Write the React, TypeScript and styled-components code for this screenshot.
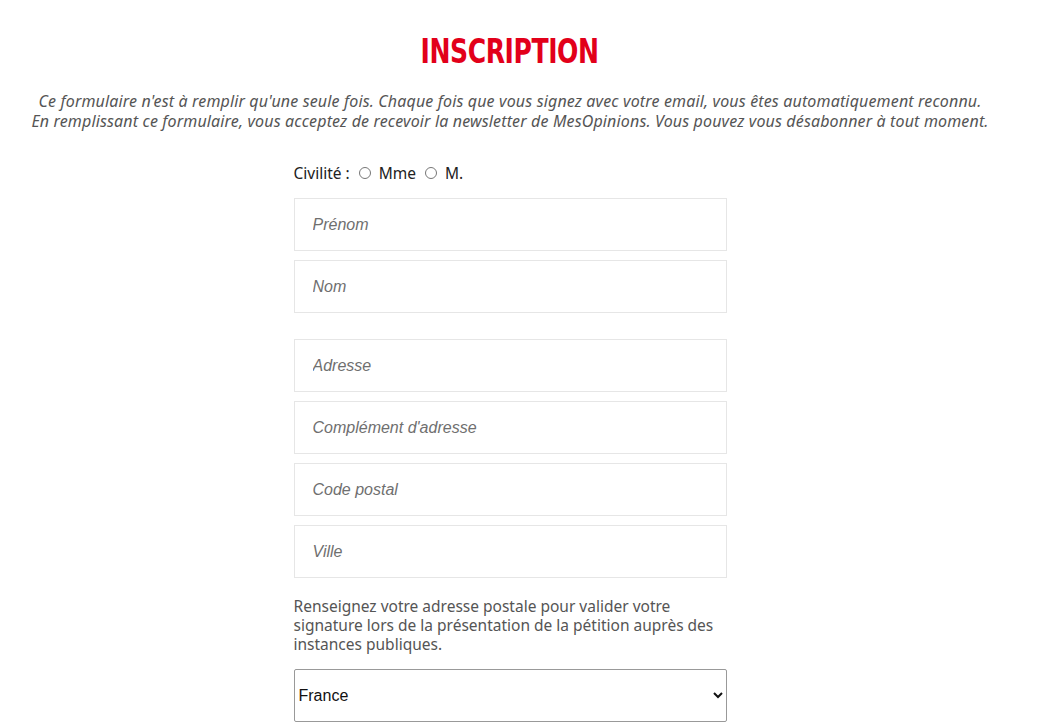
import React from 'react';
import styled, { createGlobalStyle } from 'styled-components';

const GlobalStyle = createGlobalStyle`
  html, body {
    margin: 0;
    padding: 0;
    background: #fff;
  }
  body {
    font-family: "Noto Sans", "Open Sans", sans-serif;
  }
`;

const addressFields = ['Adresse', "Complément d'adresse", 'Code postal', 'Ville'];

function App() {
  return (
    <>
      <GlobalStyle />
      <Page>
        <Title>INSCRIPTION</Title>
        <Intro>
          <IntroLine>
            Ce formulaire n'est à remplir qu'une seule fois. Chaque fois que vous signez avec votre email, vous êtes automatiquement reconnu.
          </IntroLine>
          <IntroLine>
            En remplissant ce formulaire, vous acceptez de recevoir la newsletter de MesOpinions. Vous pouvez vous désabonner à tout moment.
          </IntroLine>
        </Intro>
        <Form>
          <Civility>
            <span>Civilité :</span>
            <label><Radio type="radio" name="civ" />Mme</label>
            <label><Radio type="radio" name="civ" />M.</label>
          </Civility>
          <Group>
            <Field placeholder="Prénom" />
            <Field placeholder="Nom" />
          </Group>
          <Group>
            {addressFields.map((p) => (
              <Field key={p} placeholder={p} />
            ))}
          </Group>
          <Help>
            Renseignez votre adresse postale pour valider votre signature lors de la présentation de la pétition auprès des instances publiques.
          </Help>
          <Select defaultValue="France">
            <option>France</option>
          </Select>
        </Form>
      </Page>
    </>
  );
}

export default App;

const Page = styled.div`
  display: flex;
  flex-direction: column;
  align-items: center;
  padding: 30px 22px 0 0;
`;

const Title = styled.h1`
  margin: 0;
  font-family: "DejaVu Sans Condensed", "DejaVu Sans", sans-serif;
  font-stretch: condensed;
  font-weight: 700;
  font-size: 34px;
  line-height: 42px;
  color: #e2001a;
  letter-spacing: -0.5px;
  transform: scaleX(0.82);
`;

const Intro = styled.div`
  margin-top: 20px;
  display: flex;
  flex-direction: column;
  align-items: center;
  gap: 1px;
`;

const IntroLine = styled.p`
  margin: 0;
  font-style: italic;
  font-size: 16px;
  line-height: 19px;
  letter-spacing: 0.15px;
  color: #555;
  white-space: nowrap;
`;

const Form = styled.form`
  width: 433px;
  margin-top: 30px;
  display: flex;
  flex-direction: column;
`;

const Civility = styled.div`
  display: flex;
  align-items: center;
  gap: 9px;
  font-size: 15.5px;
  color: #222;
  height: 24px;

  label {
    display: flex;
    align-items: center;
    gap: 8px;
  }
`;

const Radio = styled.input`
  margin: 0;
  width: 12px;
  height: 12px;
  accent-color: #888;
`;

const Group = styled.div`
  display: flex;
  flex-direction: column;
  gap: 9px;
  margin-top: 13px;

  & + & {
    margin-top: 26px;
  }
`;

const Field = styled.input`
  box-sizing: border-box;
  width: 100%;
  height: 53px;
  border: 1px solid #e6e6e6;
  padding: 0 18px;
  font-family: "Liberation Sans", Arial, sans-serif;
  font-size: 16px;
  outline: none;

  &::placeholder {
    font-style: italic;
    color: #6f6f6f;
  }
`;

const Help = styled.p`
  margin: 19px 0 0;
  font-size: 15.5px;
  line-height: 19px;
  color: #555;
`;

const Select = styled.select`
  box-sizing: border-box;
  width: 100%;
  height: 53px;
  margin-top: 15px;
  border: 1px solid #999;
  border-radius: 2px;
  padding: 0;
  font-family: "Liberation Sans", Arial, sans-serif;
  font-size: 16px;
  color: #111;
  background: #fff;
`;
